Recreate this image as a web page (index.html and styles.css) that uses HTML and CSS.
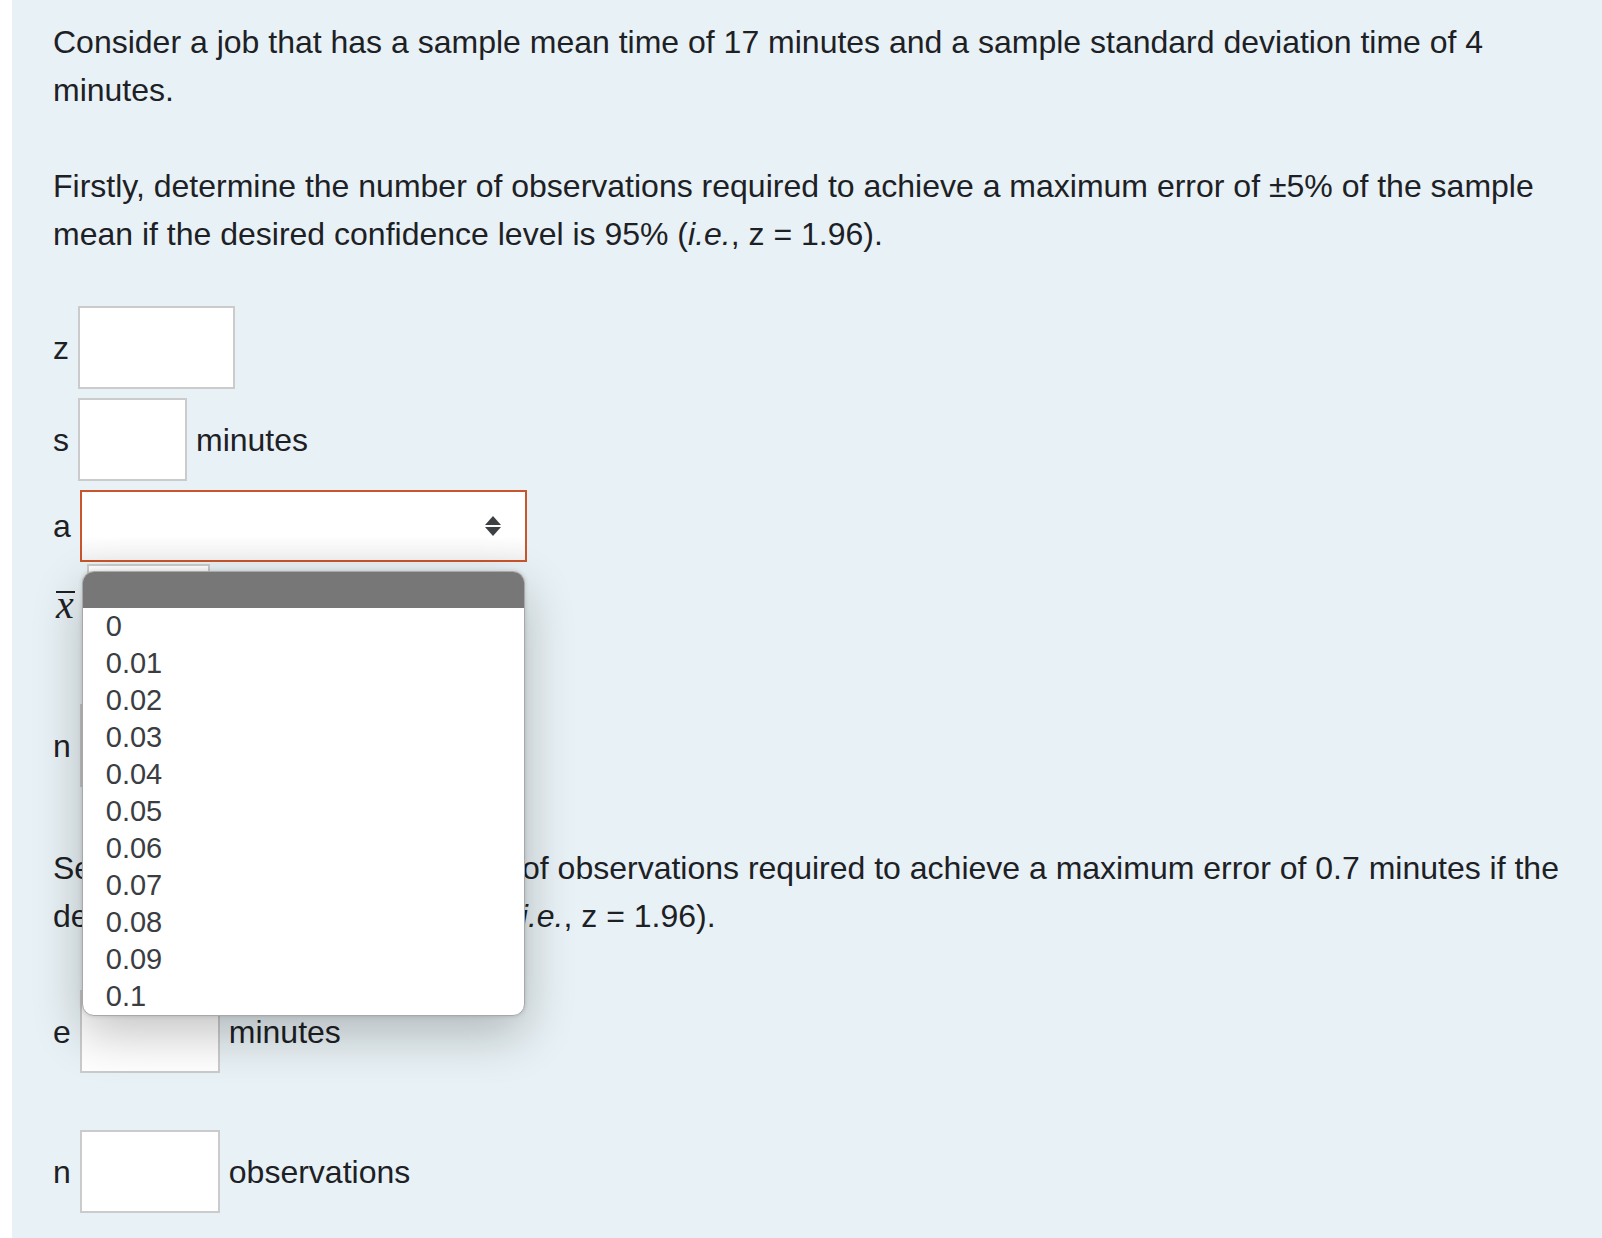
FILE: index.html
```html
<!DOCTYPE html>
<html lang="en">
<head>
    <meta charset="UTF-8">
    <meta name="viewport" content="width=device-width, initial-scale=1.0">
    <title>Number of observations</title>
    <link rel="stylesheet" href="styles.css">
</head>
<body>
<div class="question">
    <p>Consider a job that has a sample mean time of 17 minutes and a sample standard deviation time of 4 minutes.</p>

    <p>Firstly, determine the number of observations required to achieve a maximum error of &plusmn;5% of the sample mean if the desired confidence level is 95% (<i>i.e.</i>, z = 1.96).</p>

    <div class="field">
        <span class="label">z</span>
        <input type="text" class="answer w-z">
    </div>

    <div class="field">
        <span class="label">s</span>
        <input type="text" class="answer w-s">
        <span>minutes</span>
    </div>

    <div class="field">
        <span class="label">a</span>
        <div class="select-wrap">
            <div class="select" role="combobox" aria-expanded="true">
                <svg class="arrows" width="16" height="20" viewBox="0 0 16 20">
                    <path d="M8 0 L16 9 H0 Z"/>
                    <path d="M0 11 H16 L8 20 Z"/>
                </svg>
            </div>
            <ul class="options" role="listbox">
                <li class="selected"></li>
                <li>0</li>
                <li>0.01</li>
                <li>0.02</li>
                <li>0.03</li>
                <li>0.04</li>
                <li>0.05</li>
                <li>0.06</li>
                <li>0.07</li>
                <li>0.08</li>
                <li>0.09</li>
                <li>0.1</li>
            </ul>
        </div>
    </div>

    <div class="field tight">
        <span class="label math"><span class="bar">x</span></span>
        <input type="text" class="answer w-x">
        <span>minutes</span>
    </div>

    <div class="field gap">
        <span class="label">n</span>
        <input type="text" class="answer w-n">
        <span>observations</span>
    </div>

    <p class="second">Secondly, determine the number of observations required to achieve a maximum error of 0.7 minutes if the desired confidence level is 95% (<i>i.e.</i>, z = 1.96).</p>

    <div class="field">
        <span class="label">e</span>
        <input type="text" class="answer w-e">
        <span>minutes</span>
    </div>

    <div class="field gap">
        <span class="label">n</span>
        <input type="text" class="answer w-e">
        <span>observations</span>
    </div>
</div>
</body>
</html>
```

FILE: styles.css
```css
body {
    margin: 0;
    background-color: #FFFFFF;
    color: #1d2125;
    font-family: "Liberation Sans", Arial, sans-serif;
    font-size: 32px;
    line-height: 48px;
}
.question {
    margin-left: 12px;
    min-height: 100vh;
    box-sizing: border-box;
    padding: 18px 30px 40px 41px;
    background-color: #e8f1f5;
}
p {
    margin: 0 0 48px;
}
p.second {
    margin: 57px 0 50px;
}
.field {
    display: flex;
    align-items: center;
    gap: 9px;
    margin-top: 9px;
}
.field.tight {
    margin-top: 2px;
}
.field.gap {
    margin-top: 57px;
}
.label.math {
    font-family: "Liberation Serif", "DejaVu Serif", serif;
    font-style: italic;
    font-size: 40px;
    line-height: 24px;
    margin-right: 3px;
    margin-bottom: 4px;
}
.label.math .bar {
    display: inline-block;
    border-top: 2px solid currentColor;
    margin-left: 3px;
    padding-right: 1px;
}
.answer {
    box-sizing: border-box;
    height: 83px;
    margin: 0;
    padding: 0 8px;
    border: 2px solid #cbcbcb;
    border-radius: 0;
    background-color: #FFFFFF;
    font: inherit;
}
.w-z { width: 157px; }
.w-s { width: 109px; }
.w-x { width: 123px; }
.w-n { width: 140px; }
.w-e { width: 140px; }

/* select opened, with its popup list */
.select-wrap {
    position: relative;
}
.select {
    box-sizing: border-box;
    width: 447px;
    height: 72px;
    display: flex;
    align-items: center;
    justify-content: flex-end;
    padding-right: 24px;
    border: 2px solid #c8552b;
    background: linear-gradient(#FFFFFF 65%, #f2f2f2);
}
.arrows {
    fill: #3c4043;
}
.options {
    position: absolute;
    top: 81px;
    left: 2px;
    z-index: 5;
    width: 443px;
    box-sizing: border-box;
    margin: 0;
    padding: 0;
    list-style: none;
    background-color: #FFFFFF;
    border: 1.5px solid #a8a8a8;
    border-radius: 12px;
    overflow: hidden;
    box-shadow: 0 18px 50px rgba(0, 0, 0, 0.24), 0 0 4px rgba(0, 0, 0, 0.15);
    color: #3a3d42;
    font-size: 29px;
    line-height: 37px;
}
.options li {
    height: 37px;
    padding-left: 23px;
}
.options li.selected {
    height: 36px;
    background-color: #777777;
}
```
